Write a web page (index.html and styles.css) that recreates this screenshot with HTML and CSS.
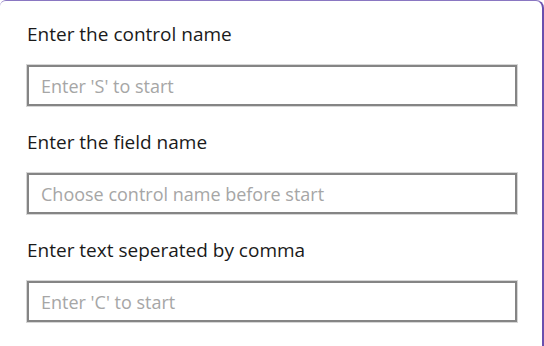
FILE: index.html
```html
<!DOCTYPE html>
<html>
<head>
<meta charset="utf-8">
<link rel="stylesheet" href="styles.css">
</head>
<body>
<div class="window">
  <div class="field">
    <label class="label">Enter the control name</label>
    <input class="box" type="text" placeholder="Enter 'S' to start">
  </div>
  <div class="field">
    <label class="label">Enter the field name</label>
    <input class="box" type="text" placeholder="Choose control name before start">
  </div>
  <div class="field">
    <label class="label">Enter text seperated by comma</label>
    <input class="box" type="text" placeholder="Enter 'C' to start">
  </div>
</div>
</body>
</html>
```
FILE: styles.css
```css
html, body {
  margin: 0;
  padding: 0;
  background: #ffffff;
}
.window {
  box-sizing: border-box;
  width: 544px;
  height: 346px;
  border-top: 1px solid #8a77c2;
  border-right: 2px solid #6a4fae;
  border-top-left-radius: 6px;
  border-top-right-radius: 8px;
  padding: 20px 25px 0 27px;
  font-family: "Open Sans", "Noto Sans", sans-serif;
  display: flex;
  flex-direction: column;
  gap: 23px;
}
.field {
  display: flex;
  flex-direction: column;
  gap: 18px;
}
.label {
  display: block;
  font-size: 19px;
  line-height: 26px;
  color: #1a1a1a;
}
.box {
  box-sizing: border-box;
  width: 490px;
  height: 41px;
  margin: 0;
  border: 2px solid #858585;
  box-shadow: 0 0 0 1px #d6d6d6;
  border-radius: 0;
  padding: 0 12px;
  font-family: "Open Sans", "Noto Sans", sans-serif;
  font-size: 18px;
  color: #1a1a1a;
  background: #ffffff;
  outline: none;
}
.box::placeholder {
  color: #a6a6a6;
  opacity: 1;
}
```
